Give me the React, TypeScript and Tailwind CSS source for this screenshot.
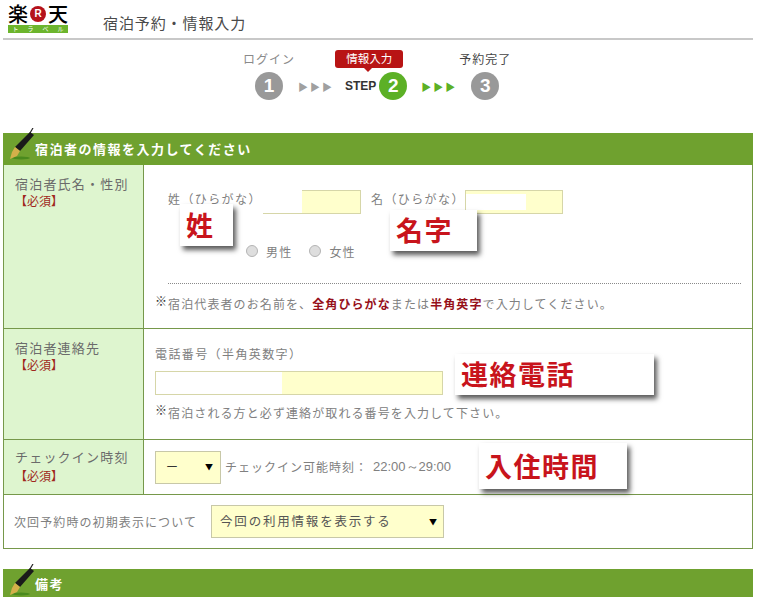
const font = { fontFamily: '"Noto Sans CJK JP", "Liberation Sans", sans-serif' }
const latin = { fontFamily: '"Liberation Sans", sans-serif' }

function Pen() {
  return (
    <svg width="30" height="37" viewBox="0 0 30 37" className="absolute left-[6px] bottom-0">
      <ellipse cx="12" cy="30" rx="9" ry="1.5" fill="#4a8a1e" />
      <path d="M24 0 L21 5" stroke="#222" strokeWidth="1.2" />
      <path d="M21 4 L25 7 L11 23 L6 19 Z" fill="#1a1a1a" />
      <path d="M6 19 L11 23 L8 28 L1 31 L3 24 Z" fill="#d4b04a" />
    </svg>
  )
}

function SectionHead({ title, className }: { title: string; className?: string }) {
  return (
    <div className={`relative flex h-[32px] items-center bg-[#6fa12f] pl-[32px] text-[13px] font-bold tracking-[1.5px] text-white ${className ?? ''}`}>
      <Pen />
      {title}
    </div>
  )
}

function Label({ title, top, gap }: { title: string; top: string; gap?: string }) {
  return (
    <div className={`w-[140px] shrink-0 border-r border-[#76984a] bg-[#def5cf] pl-[11px] ${top}`}>
      <p className="text-[13px] leading-[18px] tracking-[1.2px] text-[#6b6b6b]">{title}</p>
      <p className={`text-[12px] leading-[16px] text-[#a0281c] ${gap ?? ''}`}>【必須】</p>
    </div>
  )
}

function Note({ children }: { children: React.ReactNode }) {
  return (
    <p className="text-[12px] leading-[16px] tracking-[1.1px] text-[#808080]">
      <span className="relative top-[-3px] text-[#333]">※</span>
      {children}
    </p>
  )
}

function Callout({ text, className }: { text: string; className: string }) {
  return (
    <div className={`absolute flex items-center bg-white pl-[6px] text-[27px] font-semibold tracking-[1.5px] text-[#c8141c] shadow-[3px_4px_5px_rgba(0,0,0,0.65)] ${className}`}>
      {text}
    </div>
  )
}

function Step({ n, label, labelClass }: { n: number; label: string; labelClass: string }) {
  return (
    <div className="flex flex-col items-center">
      <span className={`text-[12px] leading-[16px] tracking-[1px] ${labelClass}`}>{label}</span>
      <span className="mt-[5px] flex h-[28px] w-[28px] items-center justify-center rounded-full bg-[#999999] text-[19px] font-bold text-white" style={latin}>
        {n}
      </span>
    </div>
  )
}

function Arrows({ color }: { color: string }) {
  return <span className={`text-[10px] leading-[28px] tracking-[2px] ${color}`}>▶▶▶</span>
}

export default function App() {
  return (
    <div className="relative h-[597px] w-[771px] overflow-hidden bg-white" style={font}>
      {/* header */}
      <div className="ml-[3px] flex h-[40px] w-[750px] border-b-2 border-[#c8c8c8]">
        <div className="ml-[5px] mt-[3px] w-[60px]">
          <div className="flex h-[21px] items-center justify-between text-[20px] font-medium leading-[21px] text-black">
            <span>楽</span>
            <span className="flex h-[16px] w-[16px] items-center justify-center rounded-full bg-[#b5121b] text-[10px] font-bold text-white" style={latin}>R</span>
            <span>天</span>
          </div>
          <div className="mt-[1px] flex h-[8px] justify-around bg-[#6cb52d] text-[6px] leading-[8px] text-white">
            <span>ト</span><span>ラ</span><span>ベ</span><span>ル</span>
          </div>
        </div>
        <h1 className="ml-[35px] mt-[13px] text-[15px] leading-[20px] tracking-[0.9px] text-[#4a4a4a]">宿泊予約・情報入力</h1>
      </div>

      {/* steps */}
      <div className="ml-[243px] mt-[11px] flex h-[82px] items-start">
        <Step n={1} label="ログイン" labelClass="text-[#8a8a8a]" />
        <div className="ml-[3px] mt-[21px]"><Arrows color="text-[#a0a0a0]" /></div>
        <div className="ml-[11px] mt-[21px] text-[12px] font-bold leading-[28px] text-[#333]" style={latin}>STEP</div>
        <div className="relative ml-[3px] mt-[21px]">
          <div className="absolute left-[-44px] top-[-22px] flex h-[18px] w-[68px] items-center justify-center rounded-[3px] bg-[#b81414] text-[11.5px] text-white">
            情報入力
            <span className="absolute bottom-[-4px] left-[29px] h-0 w-0 border-x-[4px] border-t-[4px] border-x-transparent border-t-[#b81414]" />
          </div>
          <span className="flex h-[28px] w-[28px] items-center justify-center rounded-full bg-[#5cb026] text-[19px] font-bold text-white" style={latin}>2</span>
        </div>
        <div className="ml-[14px] mt-[21px]"><Arrows color="text-[#5cb026]" /></div>
        <div className="ml-[2px]">
          <Step n={3} label="予約完了" labelClass="text-[#444]" />
        </div>
      </div>

      {/* guest form */}
      <div className="ml-[3px] w-[750px]">
        <SectionHead title="宿泊者の情報を入力してください" />
        <div className="border border-t-0 border-[#76984a]">
          <div className="relative flex h-[164px] border-b border-[#76984a]">
            <Label title="宿泊者氏名・性別" top="pt-[10px]" />
            <div className="flex-1 pl-[11px]">
              <div className="ml-[13px] mt-[25px] flex h-[24px] items-center text-[12px] tracking-[1.4px] text-[#808080]">
                <span className="w-[95px] pb-[6px]">姓（ひらがな）</span>
                <div className="flex h-[24px] w-[98px] border border-l-0 border-t-0 border-[#d6d6a8] bg-white">
                  <div className="w-[39px]" />
                  <div className="flex-1 border-t border-[#d6d6a8] bg-[#ffffcc]" />
                </div>
                <span className="ml-[10px] w-[94px] pb-[6px]">名（ひらがな）</span>
                <div className="flex h-[24px] w-[98px] border border-[#d6d6a8] bg-[#ffffcc]">
                  <div className="my-[3px] w-[60px] bg-white" />
                </div>
              </div>
              <div className="ml-[91px] mt-[28px] flex h-[20px] items-center text-[12px] tracking-[1.2px] text-[#808080]">
                <span className="relative top-[-1px] h-[12px] w-[12px] rounded-full border border-[#b4b4b4] bg-[#dedede]" />
                <span className="ml-[8px]">男性</span>
                <span className="relative top-[-1px] ml-[17px] h-[12px] w-[12px] rounded-full border border-[#b4b4b4] bg-[#dedede]" />
                <span className="ml-[8px]">女性</span>
              </div>
              <div className="ml-[13px] mt-[21px] w-[573px] border-t border-dotted border-[#8a8a8a]" />
              <div className="mt-[12px]">
                <Note>
                  宿泊代表者のお名前を、<b className="text-[#96101a]">全角ひらがな</b>または<b className="text-[#96101a]">半角英字</b>で入力してください。
                </Note>
              </div>
            </div>
            <Callout text="姓" className="left-[176px] top-[39px] h-[42px] w-[53px]" />
            <Callout text="名字" className="left-[386px] top-[45px] h-[41px] w-[87px]" />
          </div>

          <div className="relative flex h-[111px] border-b border-[#76984a]">
            <Label title="宿泊者連絡先" top="pt-[10px]" />
            <div className="flex-1 pl-[11px]">
              <p className="mt-[17px] text-[12px] leading-[16px] tracking-[1.4px] text-[#808080]">電話番号（半角英数字）</p>
              <div className="mt-[9px] flex h-[24px] w-[288px] border border-[#d6d6a8] bg-[#ffffcc]">
                <div className="w-[126px] bg-white" />
              </div>
              <div className="mt-[10px]">
                <Note>宿泊される方と必ず連絡が取れる番号を入力して下さい。</Note>
              </div>
            </div>
            <Callout text="連絡電話" className="left-[451px] top-[25px] h-[41px] w-[199px]" />
          </div>

          <div className="relative flex h-[55px] border-b border-[#76984a]">
            <Label title="チェックイン時刻" top="pt-[8px]" gap="mt-[2px]" />
            <div className="flex flex-1 items-center pl-[11px] text-[12px] tracking-[1px] text-[#808080]">
              <div className="flex h-[33px] w-[66px] items-center justify-between border border-[#c8c8a8] bg-[#ffffcc] pl-[10px] pr-[6px] text-[#333]">
                <span>ー</span>
                <span className="text-[8px] text-black">▼</span>
              </div>
              <span className="ml-[4px]">チェックイン可能時刻：</span>
              <span className="ml-[5px] text-[13px] tracking-normal" style={latin}>22:00～29:00</span>
            </div>
            <Callout text="入住時間" className="left-[475px] top-[3px] h-[46px] w-[148px]" />
          </div>

          <div className="flex h-[53px] items-center pl-[10px] text-[12px] tracking-[1.1px] text-[#808080]">
            <span>次回予約時の初期表示について</span>
            <div className="ml-[14px] flex h-[33px] w-[233px] items-center justify-between border border-[#c8c8a8] bg-[#ffffcc] pl-[8px] pr-[5px] text-[12.5px] text-[#555]">
              <span className="tracking-[1.8px]">今回の利用情報を表示する</span>
              <span className="text-[8px] text-black">▼</span>
            </div>
          </div>
        </div>
      </div>

      {/* notes */}
      <div className="ml-[3px] mt-[20px] w-[750px]">
        <SectionHead title="備考" className="pb-[2px]" />
      </div>
    </div>
  )
}
